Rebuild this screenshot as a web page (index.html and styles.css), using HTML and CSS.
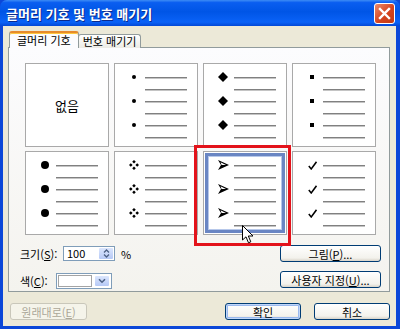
FILE: index.html
```html
<!DOCTYPE html>
<html lang="ko">
    <head>
        <meta charset="UTF-8">
        <title>글머리 기호 및 번호 매기기</title>
        <link rel="stylesheet" href="styles.css">
    </head>

    <body>
        <div class="window">
            <div class="titlebar">
                <span class="title">글머리 기호 및 번호 매기기</span>
                <span class="close">
                    <svg width="13" height="13" viewBox="0 0 13 13"><path d="M2 2 L11 11 M11 2 L2 11" stroke="#fff" stroke-width="2.4" stroke-linecap="square"/></svg>
                </span>
            </div>

            <div class="frame">
                <div class="tabs">
                    <div class="tab active">글머리 기호</div>
                    <div class="tab">번호 매기기</div>
                </div>

                <div class="panel">
                    <div class="grid">
                        <div class="cell none">없음</div>

                        <div class="cell">
                            <div class="item"><span class="mark"><b class="dot"></b></span><span class="lines"><i></i><i></i></span></div>
                            <div class="item"><span class="mark"><b class="dot"></b></span><span class="lines"><i></i><i></i></span></div>
                            <div class="item"><span class="mark"><b class="dot"></b></span><span class="lines"><i></i><i></i></span></div>
                        </div>

                        <div class="cell">
                            <div class="item"><span class="mark"><svg width="10" height="10"><path d="M5 0 L10 5 L5 10 L0 5 Z"/></svg></span><span class="lines"><i></i><i></i></span></div>
                            <div class="item"><span class="mark"><svg width="10" height="10"><path d="M5 0 L10 5 L5 10 L0 5 Z"/></svg></span><span class="lines"><i></i><i></i></span></div>
                            <div class="item"><span class="mark"><svg width="10" height="10"><path d="M5 0 L10 5 L5 10 L0 5 Z"/></svg></span><span class="lines"><i></i><i></i></span></div>
                        </div>

                        <div class="cell">
                            <div class="item"><span class="mark"><b class="square"></b></span><span class="lines"><i></i><i></i></span></div>
                            <div class="item"><span class="mark"><b class="square"></b></span><span class="lines"><i></i><i></i></span></div>
                            <div class="item"><span class="mark"><b class="square"></b></span><span class="lines"><i></i><i></i></span></div>
                        </div>

                        <div class="cell">
                            <div class="item"><span class="mark"><b class="circle"></b></span><span class="lines"><i></i><i></i></span></div>
                            <div class="item"><span class="mark"><b class="circle"></b></span><span class="lines"><i></i><i></i></span></div>
                            <div class="item"><span class="mark"><b class="circle"></b></span><span class="lines"><i></i><i></i></span></div>
                        </div>

                        <div class="cell">
                            <div class="item"><span class="mark"><svg width="10" height="10"><path d="M5 0 L6.8 1.8 L5 3.6 L3.2 1.8Z M5 6.4 L6.8 8.2 L5 10 L3.2 8.2Z M0 5 L1.8 3.2 L3.6 5 L1.8 6.8Z M6.4 5 L8.2 3.2 L10 5 L8.2 6.8Z"/></svg></span><span class="lines"><i></i><i></i></span></div>
                            <div class="item"><span class="mark"><svg width="10" height="10"><path d="M5 0 L6.8 1.8 L5 3.6 L3.2 1.8Z M5 6.4 L6.8 8.2 L5 10 L3.2 8.2Z M0 5 L1.8 3.2 L3.6 5 L1.8 6.8Z M6.4 5 L8.2 3.2 L10 5 L8.2 6.8Z"/></svg></span><span class="lines"><i></i><i></i></span></div>
                            <div class="item"><span class="mark"><svg width="10" height="10"><path d="M5 0 L6.8 1.8 L5 3.6 L3.2 1.8Z M5 6.4 L6.8 8.2 L5 10 L3.2 8.2Z M0 5 L1.8 3.2 L3.6 5 L1.8 6.8Z M6.4 5 L8.2 3.2 L10 5 L8.2 6.8Z"/></svg></span><span class="lines"><i></i><i></i></span></div>
                        </div>

                        <div class="cell selected">
                            <div class="item"><span class="mark"><svg width="11" height="10"><path d="M0 0 L11 5 L0 10 L3 5 Z"/><path d="M2.5 2.2 L8 5 L3.6 5 Z" fill="#fff"/></svg></span><span class="lines"><i></i><i></i></span></div>
                            <div class="item"><span class="mark"><svg width="11" height="10"><path d="M0 0 L11 5 L0 10 L3 5 Z"/><path d="M2.5 2.2 L8 5 L3.6 5 Z" fill="#fff"/></svg></span><span class="lines"><i></i><i></i></span></div>
                            <div class="item"><span class="mark"><svg width="11" height="10"><path d="M0 0 L11 5 L0 10 L3 5 Z"/><path d="M2.5 2.2 L8 5 L3.6 5 Z" fill="#fff"/></svg></span><span class="lines"><i></i><i></i></span></div>
                            <div class="highlight"></div>
                            <svg class="cursor" width="12" height="19" viewBox="0 0 12 19"><path d="M0.5 0.5 L0.5 15 L4 11.8 L6.5 17.8 L8.8 16.8 L6.3 11 L11 11 Z" fill="#fff" stroke="#000" stroke-width="1"/></svg>
                        </div>

                        <div class="cell">
                            <div class="item"><span class="mark"><svg width="9" height="9"><path d="M0.8 5 L3.2 8 L8.5 0.8" stroke="#000" stroke-width="1.5" fill="none"/></svg></span><span class="lines"><i></i><i></i></span></div>
                            <div class="item"><span class="mark"><svg width="9" height="9"><path d="M0.8 5 L3.2 8 L8.5 0.8" stroke="#000" stroke-width="1.5" fill="none"/></svg></span><span class="lines"><i></i><i></i></span></div>
                            <div class="item"><span class="mark"><svg width="9" height="9"><path d="M0.8 5 L3.2 8 L8.5 0.8" stroke="#000" stroke-width="1.5" fill="none"/></svg></span><span class="lines"><i></i><i></i></span></div>
                        </div>
                    </div>

                    <div class="options">
                        <div class="fields">
                            <div class="field">
                                <label class="label-size">크기(<u>S</u>):</label>
                                <div class="spin">
                                    <span class="value">100</span>
                                    <span class="spin-btn">
                                        <svg width="7" height="9" viewBox="0 0 7 9"><path d="M1 3.5 L3.5 1 L6 3.5 M1 5.5 L3.5 8 L6 5.5" stroke="#4d6185" stroke-width="1.3" fill="none"/></svg>
                                    </span>
                                </div>
                                <span class="unit">%</span>
                            </div>
                            <div class="field">
                                <label class="label-color">색(<u>C</u>):</label>
                                <div class="combo">
                                    <span class="swatch"></span>
                                    <span class="drop-btn">
                                        <svg width="8" height="6" viewBox="0 0 8 6"><path d="M1 1.2 L4 4.2 L7 1.2" stroke="#4d6185" stroke-width="1.6" fill="none"/></svg>
                                    </span>
                                </div>
                            </div>
                        </div>
                        <div class="side-buttons">
                            <button class="btn">그림(<u>P</u>)...</button>
                            <button class="btn">사용자 지정(<u>U</u>)...</button>
                        </div>
                    </div>
                </div>

                <div class="footer">
                    <button class="btn reset" disabled>원래대로(<u>E</u>)</button>
                    <div class="footer-right">
                        <button class="btn default">확인</button>
                        <button class="btn">취소</button>
                    </div>
                </div>
            </div>
        </div>
    </body>
</html>
```

FILE: styles.css
```css
body {
    margin: 0;
    font-family: "Noto Sans CJK KR", "Noto Sans", sans-serif;
    font-size: 11px;
    color: #000;
}

.window {
    width: 400px;
    height: 329px;
    display: flex;
    flex-direction: column;
    background-color: #0b47d8;
}

/* Title bar (XP blue) */
.titlebar {
    height: 26px;
    display: flex;
    align-items: center;
    justify-content: space-between;
    padding: 0 5px 0 6px;
    border-radius: 7px 7px 0 0;
    background: linear-gradient(#3d8cf5 0, #0a5ef0 10%, #0055e6 45%, #0a62f7 85%, #0348d6 100%);
    color: #fff;
    font-size: 13px;
    font-weight: bold;
    text-shadow: 1px 1px 0 #0b2a8c;
}

.close {
    width: 19px;
    height: 19px;
    display: flex;
    align-items: center;
    justify-content: center;
    border: 1px solid #fff;
    border-radius: 3px;
    background: linear-gradient(135deg, #eb8b6b, #d4441f 55%, #c23912);
}

/* Dialog body */
.frame {
    flex: 1;
    margin: 0 4px 3px 3px;
    padding: 5px 6px 0 5px;
    background-color: #ece9d8;
}

.tabs {
    display: flex;
    align-items: flex-end;
    height: 17px;
    padding-left: 1px;
    margin-bottom: -1px;
    position: relative;
    z-index: 1;
}

.tab {
    height: 13px;
    line-height: 13px;
    padding: 0 4px;
    border: 1px solid #919b9c;
    border-bottom: 0;
    border-radius: 3px 3px 0 0;
    background: linear-gradient(#ffffff, #ecebe5);
}

.tab.active {
    height: 15px;
    line-height: 15px;
    padding: 0 7px;
    border-top: 2px solid #e68b2c;
    background: #fcfcfe;
    box-shadow: inset 0 1px 0 #ffc73c;
    margin-right: -1px;
    z-index: 2;
}

.panel {
    height: 245px;
    box-sizing: border-box;
    padding: 15px 15px 0 16px;
    border: 1px solid #919b9c;
    background: linear-gradient(#fcfcfe, #f4f3ee);
}

/* Bullet grid */
.grid {
    display: grid;
    grid-template-columns: repeat(4, 84px);
    grid-template-rows: repeat(2, 84px);
    column-gap: 5px;
    row-gap: 4px;
}

.cell {
    box-sizing: border-box;
    padding-top: 7px;
    padding-left: 8px;
    border: 1px solid #a9a9a9;
    background: #fff;
    position: relative;
}

.cell.none {
    display: flex;
    align-items: center;
    justify-content: center;
    padding: 0;
    font-size: 13px;
}

.item {
    display: flex;
    align-items: flex-start;
}

.mark {
    width: 22px;
    height: 12px;
    display: flex;
    align-items: center;
    justify-content: center;
}

.mark svg {
    fill: #000;
}

.dot {
    width: 4px;
    height: 4px;
    border-radius: 50%;
    background: #000;
}

.square {
    width: 4px;
    height: 4px;
    background: #000;
}

.circle {
    width: 8px;
    height: 8px;
    border-radius: 50%;
    background: #000;
}

.lines {
    display: flex;
    flex-direction: column;
}

.lines i {
    width: 42px;
    height: 12px;
    display: flex;
    align-items: center;
}

.lines i::before {
    content: "";
    width: 100%;
    height: 1px;
    background: #808080;
    box-shadow: 0 1px 0 #c4c4c4;
}

.cell.selected::before {
    content: "";
    position: absolute;
    inset: 1px;
    border: 3px solid #6a86c3;
    box-shadow: inset 0 0 0 1px #b7c8ea, 0 0 0 1px #fff;
}

.highlight {
    position: absolute;
    left: -10px;
    top: -7px;
    width: 97px;
    height: 101px;
    box-sizing: border-box;
    border: 3px solid #e3131b;
}

.cursor {
    position: absolute;
    left: 38px;
    top: 73px;
}

/* Size / colour options */
.options {
    display: flex;
    justify-content: space-between;
    margin: 10px -7px 0 -5px;
}

.fields {
    display: flex;
    flex-direction: column;
    gap: 10px;
}

.field {
    display: flex;
    align-items: center;
    height: 17px;
}

.label-size {
    width: 43px;
}

.label-color {
    width: 36px;
}

.spin {
    width: 52px;
    height: 15px;
    box-sizing: border-box;
    display: flex;
    justify-content: space-between;
    border: 1px solid #7f9db9;
    background: #fff;
}

.value {
    padding-left: 3px;
    line-height: 13px;
}

.spin-btn,
.drop-btn {
    width: 14px;
    display: flex;
    align-items: center;
    justify-content: center;
    border: 1px solid #fff;
    border-radius: 2px;
    background: linear-gradient(#dbe6fd, #b6c9f6);
}

.unit {
    margin-left: 6px;
}

.combo {
    width: 56px;
    height: 16px;
    box-sizing: border-box;
    display: flex;
    gap: 2px;
    padding: 1px;
    border: 1px solid #7f9db9;
    background: #fff;
}

.swatch {
    flex: 1;
    border: 1px solid #a4a4a4;
    background: #fff;
}

.side-buttons {
    display: flex;
    flex-direction: column;
    gap: 9px;
}

.side-buttons .btn {
    width: 101px;
}

/* Buttons */
.btn {
    height: 17px;
    padding: 0;
    border: 1px solid #003c74;
    border-radius: 3px;
    background: linear-gradient(#ffffff, #f3f2ec 80%, #d8d3c8);
    font-family: inherit;
    font-size: 11px;
    color: #000;
    line-height: 14px;
}

.btn.default {
    box-shadow: inset 0 0 0 1px #c0d6f8, inset 0 0 0 2px #9ab9ee;
}

.btn:disabled {
    border-color: #c9c7ba;
    background: #f5f4ea;
    color: #aca899;
}

.footer {
    display: flex;
    justify-content: space-between;
    margin-top: 11px;
    padding-left: 2px;
}

.reset {
    width: 77px;
}

.footer-right {
    display: flex;
    gap: 13px;
}

.footer-right .btn {
    width: 76px;
}
```
